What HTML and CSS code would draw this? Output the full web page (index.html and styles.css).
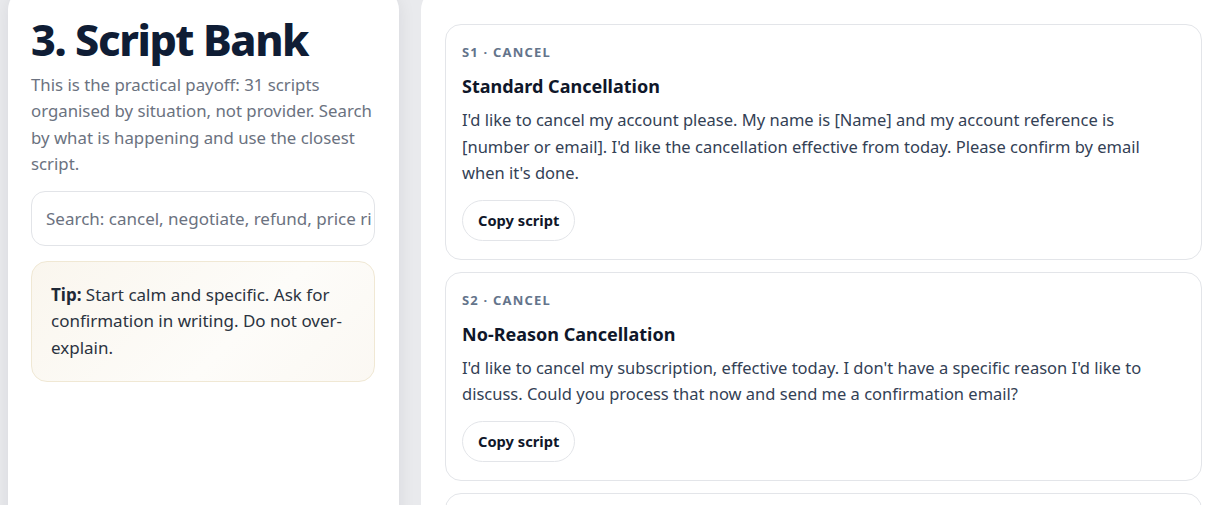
FILE: index.html
```html
<!DOCTYPE html>
<html lang="en">
  <head>
    <meta charset="UTF-8" />
    <meta name="viewport" content="width=device-width, initial-scale=1.0" />
    <title>Script Bank</title>
    <link rel="stylesheet" href="styles.css">
  </head>
  <body>
    <div class="layout">
      <!-- 왼쪽: 제목, 검색, 팁 -->
      <aside class="side-panel">
        <h1 class="page-title">3. Script Bank</h1>
        <p class="lead">This is the practical payoff: 31 scripts organised by situation, not provider. Search by what is happening and use the closest script.</p>
        <input type="text" class="search-box" placeholder="Search: cancel, negotiate, refund, price rise, complaint" />
        <div class="tip-box">
          <strong>Tip:</strong> Start calm and specific. Ask for confirmation in writing. Do not over-explain.
        </div>
      </aside>

      <!-- 오른쪽: 스크립트 목록 -->
      <main class="script-panel">
        <div class="script-card">
          <div class="script-tag">S1 · Cancel</div>
          <h3 class="script-title">Standard Cancellation</h3>
          <p class="script-text">I'd like to cancel my account please. My name is [Name] and my account reference is [number or email]. I'd like the cancellation effective from today. Please confirm by email when it's done.</p>
          <button type="button" class="copy-btn">Copy script</button>
        </div>

        <div class="script-card">
          <div class="script-tag">S2 · Cancel</div>
          <h3 class="script-title">No-Reason Cancellation</h3>
          <p class="script-text">I'd like to cancel my subscription, effective today. I don't have a specific reason I'd like to discuss. Could you process that now and send me a confirmation email?</p>
          <button type="button" class="copy-btn">Copy script</button>
        </div>

        <div class="script-card">
          <div class="script-tag">S3 · Cancel</div>
          <h3 class="script-title">Cancellation After Price Rise</h3>
          <p class="script-text">I've had notice of a price increase and I'd like to cancel rather than accept it.</p>
          <button type="button" class="copy-btn">Copy script</button>
        </div>
      </main>
    </div>
  </body>
</html>
```

FILE: styles.css
```css
* {
  box-sizing: border-box;
}

html,
body {
  margin: 0;
  height: 100%;
  overflow: hidden;
}

body {
  background: #e9eaed;
  font-family: "Noto Sans", "Open Sans", sans-serif;
  color: #334155;
}

.layout {
  display: grid;
  grid-template-columns: 391px 805px;
  gap: 22px;
  padding: 0 8px;
  margin-top: -12px;
  width: 1240px;
}

.side-panel {
  background: #fff;
  border-radius: 22px;
  padding: 26px 24px 24px 23px;
  min-height: 560px;
  box-shadow: 0 4px 18px rgba(15, 23, 42, 0.08);
}

.page-title {
  margin: 0;
  font-size: 43px;
  font-weight: 800;
  line-height: 1.2;
  letter-spacing: -1.4px;
  color: #0f1d35;
}

.lead {
  margin: 6px 0 13px;
  font-size: 16.8px;
  line-height: 26.5px;
  color: #6b7280;
}

.search-box {
  display: block;
  width: 100%;
  height: 55px;
  padding: 0 2px 0 14px;
  border: 1px solid #e2e4e8;
  border-radius: 14px;
  font-family: inherit;
  font-size: 17px;
  color: #334155;
  background: #fff;
  outline: none;
}

.search-box::placeholder {
  color: #6b7280;
}

.tip-box {
  margin-top: 15px;
  padding: 20px 19px;
  border: 1px solid #f0e8d4;
  border-radius: 16px;
  background: linear-gradient(135deg, #faf6ee 0%, #fdfcf9 60%, #fbf8f3 100%);
  font-size: 17px;
  line-height: 26.5px;
  color: #2b3340;
}

.tip-box strong {
  color: #1f2937;
}

.script-panel {
  background: #fff;
  border-radius: 22px;
  padding: 36px 24px 24px;
  display: flex;
  flex-direction: column;
  gap: 12px;
  min-height: 560px;
}

.script-card {
  border: 1px solid #e3e5e9;
  border-radius: 16px;
  padding: 18px 24px 18px 16px;
}

.script-tag {
  font-size: 13px;
  font-weight: 700;
  letter-spacing: 1.2px;
  text-transform: uppercase;
  color: #64748b;
}

.script-title {
  margin: 13px 0 9px;
  font-size: 18px;
  font-weight: 700;
  color: #0f172a;
}

.script-text {
  margin: 0 0 13px;
  font-size: 16.5px;
  line-height: 26.5px;
  color: #334155;
}

.copy-btn {
  height: 41px;
  padding: 0 15px;
  border: 1px solid #e3e5e9;
  border-radius: 999px;
  background: #fff;
  font-family: inherit;
  font-size: 14.7px;
  font-weight: 700;
  color: #0f172a;
  cursor: pointer;
}
```
